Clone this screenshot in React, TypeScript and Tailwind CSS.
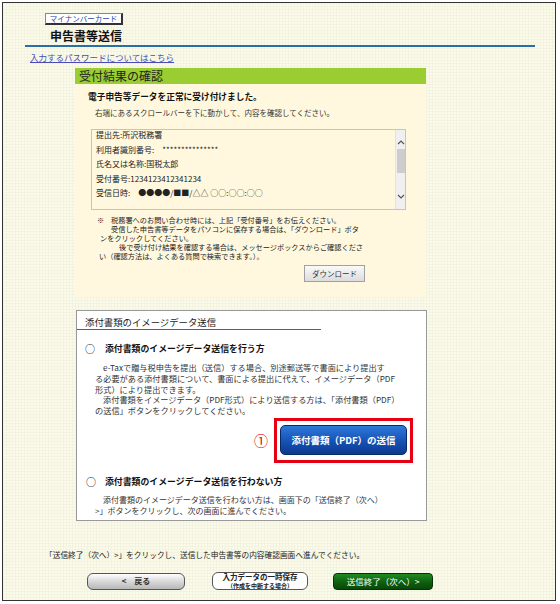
import React from "react";

const jp = "font-['MS_UI_Gothic','Noto_Sans_CJK_JP',sans-serif]";

function ScrollBar() {
  return (
    <div className="flex flex-col items-center w-[10px] h-full bg-[#f0f0f0] border-l border-[#e2e2e2]">
      <svg width="8" height="6" viewBox="0 0 8 6" className="mt-[9px]">
        <path d="M1 5 L4 2 L7 5" stroke="#555" strokeWidth="1.2" fill="none" />
      </svg>
      <div className="mt-[4px] w-[8px] h-[24px] bg-[#cdcdcd]" />
      <div className="flex-1" />
      <svg width="8" height="6" viewBox="0 0 8 6" className="mb-[9px]">
        <path d="M1 1 L4 4 L7 1" stroke="#555" strokeWidth="1.2" fill="none" />
      </svg>
    </div>
  );
}

function ReceiptBox() {
  const lines = [
    "提出先:所沢税務署",
    "利用者識別番号:　***************",
    "氏名又は名称:国税太郎",
    "受付番号:1234123412341234",
    "受信日時:　●●●●/■■/△△ ○○:○○:○○",
  ];
  return (
    <div className="ml-[16px] mt-[10px] w-[315px] h-[81px] border border-[#c4c4c4] bg-[#fff8de] flex overflow-hidden">
      <div className="flex-1 -mt-[2px] pl-[4px]">
        {lines.map((l, i) => (
          <div key={i} className="text-[8px] leading-[14.5px] text-[#222] whitespace-nowrap">
            {l}
          </div>
        ))}
      </div>
      <ScrollBar />
    </div>
  );
}

export default function App() {
  return (
    <div className={`w-[560px] h-[604px] bg-white pt-[2px] pl-[2px] ${jp}`}>
      <div className="w-[554px] h-[599px] border border-[#333] bg-[#fbfbec] bg-[image:linear-gradient(90deg,#f3f3e0_1px,transparent_1px),linear-gradient(#f3f3e0_1px,transparent_1px)] bg-[length:3px_3px] flex flex-col">
        <div className="ml-[42px] mt-[10px] w-[78px] h-[12px] bg-white border border-[#888] border-r-[2px] border-b-[2px] border-r-[#333] border-b-[#333] flex items-center justify-center text-[7.5px] leading-none text-[#2244aa]">
          マイナンバーカード
        </div>
        <div className="ml-[47px] mt-[4px] text-[12px] leading-[14px] font-bold text-[#111]">
          申告書等送信
        </div>
        <div className="ml-[22px] mt-[2px] w-[510px] h-[2px] bg-[#2a6ea8]" />
        <div className="ml-[27px] mt-[4px] text-[8.5px] leading-[12px] text-[#4a4ab8] underline">
          入力するパスワードについてはこちら
        </div>

        {/* 受付結果の確認 */}
        <div className="ml-[72px] mt-[5px] w-[351px] bg-[#fff8de] flex flex-col pb-[15px]">
          <div className="h-[16px] bg-[#9acd32] pl-[4px] text-[12px] leading-[16px] text-[#222]">
            受付結果の確認
          </div>
          <div className="ml-[13px] mt-[7px] text-[8.7px] leading-[12px] font-bold text-[#111]">
            電子申告等データを正常に受け付けました。
          </div>
          <div className="ml-[20px] mt-[4px] text-[7.5px] leading-[12px] text-[#333]">
            右端にあるスクロールバーを下に動かして、内容を確認してください。
          </div>
          <ReceiptBox />
          <div className="mt-[6px] text-[7.2px] leading-[9px] text-[#222] whitespace-nowrap">
            <div className="flex">
              <span className="ml-[22px] w-[14px]">※</span>
              <span>税務署へのお問い合わせ時には、上記「受付番号」をお伝えください。</span>
            </div>
            <div className="ml-[36px]">受信した申告書等データをパソコンに保存する場合は、「ダウンロード」ボタ</div>
            <div className="ml-[25px]">ンをクリックしてください。</div>
            <div className="ml-[44px]">後で受け付け結果を確認する場合は、メッセージボックスからご確認くださ</div>
            <div className="ml-[24px]">い（確認方法は、よくある質問で検索できます。）。</div>
          </div>
          <div className="ml-[229px] mt-[4px] w-[61px] h-[17px] border border-[#a0a0a0] bg-[linear-gradient(#fafafa,#dcdcdc)] flex items-center justify-center text-[7.5px] text-[#333]">
            ダウンロード
          </div>
        </div>

        {/* 添付書類のイメージデータ送信 */}
        <div className="ml-[73px] mt-[13px] w-[351px] h-[211px] bg-white border border-[#999] flex flex-col">
          <div className="ml-[8px] mt-[5px] text-[9.4px] leading-[12px] text-[#222]">
            添付書類のイメージデータ送信
          </div>
          <div className="mt-[1px] w-[244px] h-[1px] bg-[#2a6ea8]" />
          <div className="mt-[13px] flex items-center text-[8.9px] leading-[12px] font-bold text-[#111]">
            <span className="ml-[8px] w-[20px] font-normal text-[10px]">○</span>
            <span>添付書類のイメージデータ送信を行う方</span>
          </div>
          <div className="mt-[7px] text-[8.2px] leading-[10.75px] text-[#333] whitespace-nowrap">
            <div className="ml-[26px]">e-Taxで贈与税申告を提出（送信）する場合、別途郵送等で書面により提出す</div>
            <div className="ml-[18px]">る必要がある添付書類について、書面による提出に代えて、イメージデータ（PDF</div>
            <div className="ml-[18px]">形式）により提出できます。</div>
            <div className="ml-[26px]">添付書類をイメージデータ（PDF形式）により送信する方は、「添付書類（PDF）</div>
            <div className="ml-[18px]">の送信」ボタンをクリックしてください。</div>
          </div>
          <div className="mt-[2px] flex items-center justify-end pr-[13px]">
            <span className="mr-[6px] text-[14px] leading-none text-[#e00000]">①</span>
            <div className="w-[139px] h-[45px] border-[3px] border-[#e60012] flex items-center justify-center">
              <div className="w-[127px] h-[30px] rounded-[5px] border border-[#0a2a66] bg-[linear-gradient(#2f78d8,#1552b5_55%,#0c3a8e)] flex items-center justify-center text-[9.5px] font-bold text-white">
                添付書類（PDF）の送信
              </div>
            </div>
          </div>
          <div className="mt-[13px] flex items-center text-[8.9px] leading-[12px] font-bold text-[#111]">
            <span className="ml-[9px] w-[19px] font-normal text-[10px]">○</span>
            <span>添付書類のイメージデータ送信を行わない方</span>
          </div>
          <div className="mt-[6px] text-[8px] leading-[11px] text-[#333] whitespace-nowrap">
            <div className="ml-[26px]">添付書類のイメージデータ送信を行わない方は、画面下の「送信終了（次へ）</div>
            <div className="ml-[18px]">&gt;」ボタンをクリックし、次の画面に進んでください。</div>
          </div>
        </div>

        <div className="ml-[42px] mt-[28px] text-[7.7px] leading-[11px] text-[#222] whitespace-nowrap">
          「送信終了（次へ）&gt;」をクリックし、送信した申告書等の内容確認画面へ進んでください。
        </div>

        <div className="mt-[12px] flex items-center">
          <div className="ml-[84px] w-[98px] h-[17px] rounded-[6px] border border-[#555] bg-[linear-gradient(#ffffff,#d8d8d8_50%,#b8b8b8)] flex items-center justify-center text-[8px] font-bold text-[#333]">
            &lt;　戻る
          </div>
          <div className="ml-[27px] w-[96px] h-[18px] rounded-[6px] border border-[#555] bg-white flex flex-col items-center justify-center font-bold text-[#222]">
            <div className="text-[7.5px] leading-[8.5px]">入力データの一時保存</div>
            <div className="text-[6px] leading-[7.5px]">（作成を中断する場合）</div>
          </div>
          <div className="ml-[25px] w-[100px] h-[17px] rounded-[4px] border border-[#063306] bg-[linear-gradient(#218a21,#0d5c0d_60%,#084808)] flex items-center justify-center text-[8.5px] text-white">
            送信終了（次へ）&gt;
          </div>
        </div>
      </div>
    </div>
  );
}
